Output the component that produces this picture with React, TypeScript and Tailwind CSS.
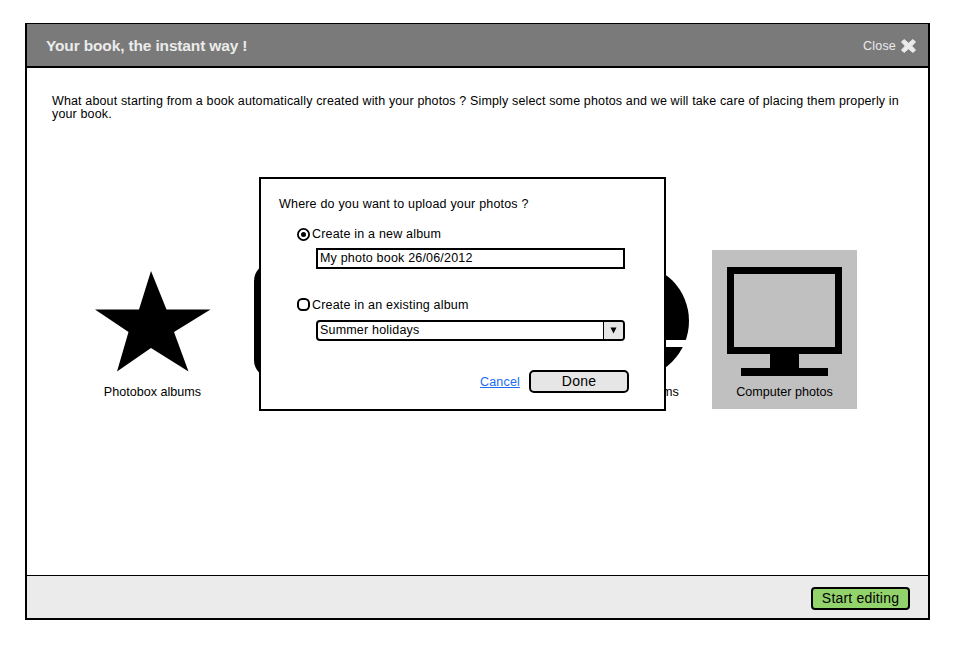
import React from "react";

function Tile({ label, selected, className = "", labelClass = "", children }: {
  label?: string;
  selected?: boolean;
  className?: string;
  labelClass?: string;
  children?: React.ReactNode;
}) {
  return (
    <div className={`flex h-[159px] w-[145px] shrink-0 flex-col items-center ${selected ? "bg-[#c0c0c0]" : ""} ${className}`}>
      <svg className="block h-[134px] w-[145px] shrink-0" viewBox="0 0 145 134">{children}</svg>
      {label && <span className={`whitespace-nowrap text-[12.600px] leading-[16px] ${labelClass}`}>{label}</span>}
    </div>
  );
}

function UploadDialog() {
  return (
    <div className="absolute left-[232px] top-[153px] flex h-[234px] w-[407px] flex-col border-2 border-black bg-white text-[12.500px] tracking-[0.19px]">
      <p className="ml-[18px] mt-[17px] h-[16px] whitespace-nowrap leading-[16px]">Where do you want to upload your photos ?</p>
      <label className="ml-[36px] mt-[15px] flex h-[16px] items-start gap-[2px] leading-[15px]">
        <svg className="mt-[1px] h-[13px] w-[13px]" viewBox="0 0 13 13">
          <circle cx="6.5" cy="6.5" r="5.6" fill="white" stroke="black" strokeWidth="1.8" />
          <circle cx="6.5" cy="6.5" r="2.5" />
        </svg>
        <span>Create in a new album</span>
      </label>
      <div className="ml-[55px] mt-[5px] flex h-[21px] w-[309px] items-start border-2 border-black pl-[2px] leading-[17px]">
        <span>My photo book 26/06/2012</span>
      </div>
      <label className="ml-[36px] mt-[28px] flex h-[16px] items-start gap-[2px] leading-[16px]">
        <svg className="mt-[1px] h-[13px] w-[13px]" viewBox="0 0 13 13">
          <rect x="1" y="1" width="11" height="11" rx="4.2" fill="white" stroke="black" strokeWidth="2" />
        </svg>
        <span>Create in an existing album</span>
      </label>
      <div className="ml-[55px] mt-[7px] flex h-[21px] w-[309px] items-stretch overflow-hidden rounded-[4px] border-2 border-black leading-[17px]">
        <span className="grow pl-[2px]">Summer holidays</span>
        <span className="flex w-[20px] items-center justify-center border-l border-black bg-[#e6e6e6]">
          <svg className="h-[7px] w-[7px]" viewBox="0 0 7 7"><path d="M0.500 0.500h6L3.500 6.500z" /></svg>
        </span>
      </div>
      <div className="mr-[35px] mt-[29px] flex items-center justify-end gap-[9px]">
        <a className="leading-[16px] text-[#1a6cf0] underline">Cancel</a>
        <button className="flex h-[23px] w-[100px] items-start justify-center rounded-[5px] border-2 border-black bg-[#e6e6e6] text-[14px] leading-[19px] tracking-[0.2px]">Done</button>
      </div>
    </div>
  );
}

export default function App() {
  return (
    <div className="h-[647px] w-[960px] overflow-hidden bg-white pl-[25px] pt-[23px] font-['Liberation_Sans',Arial,sans-serif] text-black">
      <div className="relative flex h-[597px] w-[905px] flex-col border-2 border-t border-black">
        <header className="flex h-[44px] shrink-0 items-center justify-between border-b-2 border-black bg-[#7a7a7a] pl-[19px] pr-[12px] pt-[2px] text-[#ebebeb]">
          <h1 className="text-[15.500px] font-bold tracking-[-0.15px]">Your book, the instant way !</h1>
          <div className="flex items-center gap-[5px] text-[12.500px] tracking-[0.19px]">
            <span>Close</span>
            <svg className="h-[14px] w-[15px]" viewBox="0 0 15 14">
              <path d="M3 0.5 7.5 4.2 12 0.5 14.5 3 10.7 7 14.5 11 12 13.5 7.5 9.8 3 13.5 0.5 11 4.3 7 0.5 3z" fill="#ebebeb" stroke="#ebebeb" strokeLinejoin="round" />
            </svg>
          </div>
        </header>
        <main className="flex grow flex-col">
          <p className="ml-[25px] mt-[27px] h-[26px] w-[870px] text-[12.500px] leading-[13px] tracking-[0.14px]">
            What about starting from a book automatically created with your photos ? Simply select some photos and we will take care of placing them properly in<br />your book.
          </p>
          <div className="ml-[52px] mt-[129px] flex">
            <Tile label="Photobox albums" labelClass="ml-[2px]">
              <path d="M72 21 87.5 59.5H131.5L95 82 109.500 121.500 72 98 38 121.500 49.500 82 16 59.500H60z" />
            </Tile>
            <Tile className="ml-[15px]">
              <rect x="15" y="13" width="115" height="115" rx="18" />
            </Tile>
            <Tile className="ml-[15px]">
              <circle cx="43" cy="71" r="26" />
              <circle cx="102" cy="71" r="26" />
            </Tile>
            <Tile label="albums" className="ml-[15px]" labelClass="ml-[54px]">
              <circle cx="72.500" cy="71" r="57.500" />
              <path d="M73 90h72v7H73z" fill="white" />
            </Tile>
            <Tile label="Computer photos" selected className="ml-[8px]">
              <path fillRule="evenodd" d="M15 17h115v87H15zM22 24v73h101V24z" />
              <path d="M58 104h29v14h29v8H29v-8h29z" />
            </Tile>
          </div>
        </main>
        <footer className="flex h-[43px] shrink-0 items-center justify-end border-t border-black bg-[#ebebeb] pr-[18px] pt-[3px]">
          <button className="flex h-[23px] w-[99px] items-start justify-center rounded-[4px] border-2 border-black bg-[#93d36c] text-[14px] leading-[18px] tracking-[0.2px]">Start editing</button>
        </footer>
        <UploadDialog />
      </div>
    </div>
  );
}
